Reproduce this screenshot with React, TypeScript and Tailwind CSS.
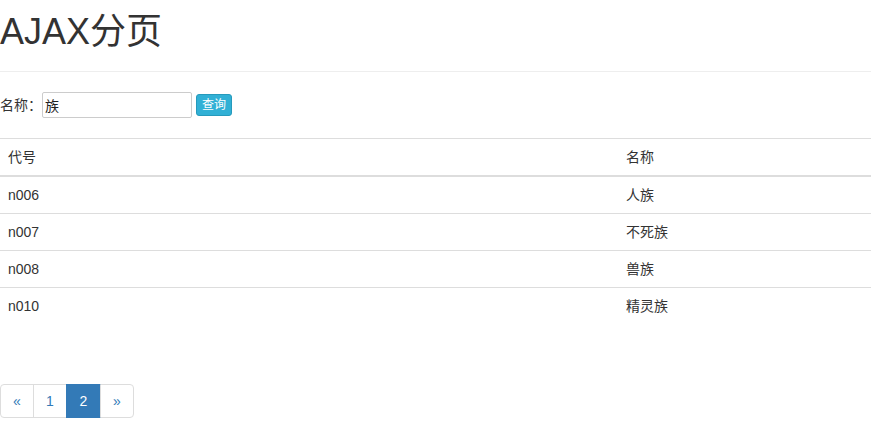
import * as React from 'react';

const rows = [
    { code: 'n006', name: '人族' },
    { code: 'n007', name: '不死族' },
    { code: 'n008', name: '兽族' },
    { code: 'n010', name: '精灵族' },
];

export default function App() {
    return (
        <div
            className="min-h-screen bg-white text-[14px] leading-[20px] text-[#333]"
            style={{ fontFamily: '"Liberation Sans", Arial, "Noto Sans CJK SC", sans-serif' }}
        >
            {/* Page header */}
            <div className="border-b border-[#eee] pb-[9px]">
                <h1 className="pt-[12px] pb-[10px] text-[36px] leading-[39.6px] font-normal">AJAX分页</h1>
            </div>

            {/* Search form */}
            <div className="mt-[20px] flex items-center">
                <label>名称：</label>
                <input
                    defaultValue="族"
                    className="ml-0 h-[26px] w-[150px] rounded-[2px] border border-[#ccc] px-[2px] text-[14px] text-[#222] outline-none"
                />
                <button className="ml-[4px] h-[22px] rounded-[3px] border border-[#269abc] bg-[#31b0d5] px-[5px] text-[12px] leading-[18px] text-white">
                    查询
                </button>
            </div>

            {/* Data table */}
            <table className="mt-[20px] w-full border-collapse">
                <thead>
                    <tr className="border-t border-[#ddd]">
                        <th className="w-[618px] border-b-2 border-[#ddd] p-[8px] text-left font-normal">代号</th>
                        <th className="border-b-2 border-[#ddd] p-[8px] text-left font-normal">名称</th>
                    </tr>
                </thead>
                <tbody>
                    {rows.map((row, i) => (
                        <tr key={row.code} className={i > 0 ? 'border-t border-[#ddd]' : ''}>
                            <td className="p-[8px]">{row.code}</td>
                            <td className="p-[8px]">{row.name}</td>
                        </tr>
                    ))}
                </tbody>
            </table>

            {/* Pagination */}
            <ul className="mt-[60px] inline-flex">
                <li>
                    <a className="block w-[34px] rounded-l-[4px] border border-[#ddd] py-[6px] text-center text-[#337ab7]">«</a>
                </li>
                <li>
                    <a className="-ml-px block w-[34px] border border-[#ddd] py-[6px] text-center text-[#337ab7]">1</a>
                </li>
                <li>
                    <a className="-ml-px block w-[35px] border border-[#337ab7] bg-[#337ab7] py-[6px] text-center text-white">2</a>
                </li>
                <li>
                    <a className="-ml-px block w-[34px] rounded-r-[4px] border border-[#ddd] py-[6px] text-center text-[#337ab7]">»</a>
                </li>
            </ul>
        </div>
    );
}
